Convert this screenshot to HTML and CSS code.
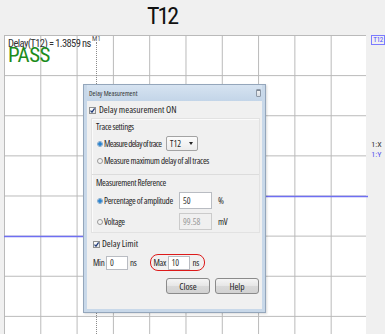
FILE: index.html
```html
<!DOCTYPE html>
<html lang="en">
<head>
  <meta charset="UTF-8">
  <title>Delay Measurement</title>
  <link rel="stylesheet" href="styles.css">
</head>
<body>

  <div class="header">T12</div>

  <div class="main">
    <div class="plot">
      <svg class="trace" width="364" height="299">
        <polyline points="0,201.5 175,201.5 175,161.5 364,161.5" />
      </svg>
      <div class="marker"></div>
      <div class="marker-label">M1</div>
      <div class="readout">Delay(T12) = 1.3859 ns</div>
      <div class="verdict">PASS</div>

      <div class="dialog">
        <div class="titlebar">
          <span class="dlg-title">Delay Measurement</span>
          <span class="grip"></span>
        </div>
        <div class="dlg-body">
          <div class="check-row top-check">
            <span class="checkbox"><svg width="5" height="5"><path d="M0.5 2.6 L2 4.2 L4.6 0.4" /></svg></span>
            Delay measurement ON
          </div>

          <div class="group">
            <div class="section">
              <div class="section-title">Trace settings</div>
              <div class="opt-row">
                <span class="radio on"></span>
                <span class="opt-label trace-label">Measure delay of trace</span>
                <span class="select">T12<span class="caret"></span></span>
              </div>
              <div class="opt-row">
                <span class="radio"></span>
                <span class="opt-label">Measure maximum delay of all traces</span>
              </div>
            </div>
            <div class="section second">
              <div class="section-title">Measurement Reference</div>
              <div class="opt-row tall">
                <span class="radio on"></span>
                <span class="opt-label ref-label">Percentage of amplitude</span>
                <span class="field wide">50</span>
                <span class="unit">%</span>
              </div>
              <div class="opt-row tall">
                <span class="radio"></span>
                <span class="opt-label ref-label">Voltage</span>
                <span class="field wide disabled">99.58</span>
                <span class="unit">mV</span>
              </div>
            </div>
          </div>

          <div class="check-row limit-check">
            <span class="checkbox"><svg width="5" height="5"><path d="M0.5 2.6 L2 4.2 L4.6 0.4" /></svg></span>
            Delay Limit
          </div>

          <div class="limit-row">
            <span class="lim-label">Min</span>
            <span class="field small">0</span>
            <span class="unit">ns</span>
            <span class="highlight">
              <span class="lim-label">Max</span>
              <span class="field small">10</span>
              <span class="unit">ns</span>
            </span>
          </div>

          <div class="buttons">
            <button class="btn">Close</button>
            <button class="btn">Help</button>
          </div>
        </div>
      </div>
    </div>

    <div class="side">
      <span class="tag">T12</span>
      <div class="axis-x">1:X</div>
      <div class="axis-y">1:Y</div>
    </div>
  </div>

</body>
</html>
```
FILE: styles.css
```css
* {
  box-sizing: border-box;
}

body {
  margin: 0;
  width: 385px;
  height: 334px;
  overflow: hidden;
  background: #f0f0f0;
  font-family: "Open Sans", sans-serif;
  font-stretch: 75%;
  color: #1e1e1e;
}

.header {
  height: 35px;
  padding: 2px 0 0 147px;
  font-family: Roboto, sans-serif;
  font-stretch: 75%;
  font-size: 24px;
  line-height: 28px;
  letter-spacing: -2px;
  color: #111;
}

.main {
  display: flex;
}

/* scope plot */
.plot {
  position: relative;
  width: 364px;
  height: 299px;
  margin-left: 4px;
  background-color: #fff;
  background-image:
    linear-gradient(to right, #b9b9b9 1px, transparent 1px),
    linear-gradient(to bottom, #b9b9b9 1px, transparent 1px);
  background-size: 36.3px 100%, 100% 40.14px;
}

.trace {
  position: absolute;
  left: 0;
  top: 0;
}

.trace polyline {
  fill: none;
  stroke: #6f6ff2;
  stroke-width: 1.4;
}

.marker {
  position: absolute;
  left: 92px;
  top: 7px;
  bottom: 0;
  border-left: 1px dotted #8a8a8a;
}

.marker-label {
  position: absolute;
  left: 88px;
  top: 0;
  font-family: Roboto, sans-serif;
  font-stretch: 75%;
  font-size: 7px;
  line-height: 8px;
  color: #555;
}

.readout {
  position: absolute;
  left: 4px;
  top: 3px;
  font-family: Roboto, sans-serif;
  font-stretch: 75%;
  font-size: 10.5px;
  line-height: 12px;
  letter-spacing: -0.6px;
  color: #333;
}

.verdict {
  position: absolute;
  left: 4px;
  top: 8px;
  font-family: Roboto, sans-serif;
  font-stretch: 75%;
  font-size: 21px;
  line-height: 24px;
  letter-spacing: -0.6px;
  color: #1c8c1c;
}

/* dialog window */
.dialog {
  position: absolute;
  left: 79px;
  top: 49px;
  width: 183px;
  height: 229px;
  border: 1px solid #94a6bb;
  background: #c8d8e9;
  padding: 0 3px 3px;
  box-shadow: 1px 1px 2px rgba(0, 0, 0, 0.15);
}

.titlebar {
  height: 16px;
  display: flex;
  align-items: center;
  justify-content: space-between;
  padding: 0 1px 0 2px;
  background: linear-gradient(#d6e3f1, #c3d5e8);
}

.dlg-title {
  font-size: 7px;
  color: #333;
}

.grip {
  width: 5px;
  height: 8px;
  border: 1px solid #8d98a6;
  border-radius: 1px;
  background: linear-gradient(#f4f4f4, #d8dde3);
  box-shadow: inset 0 3px 0 -2px #7d8794;
}

.dlg-body {
  height: 208px;
  background: #f0f0f0;
  font-size: 9px;
  letter-spacing: -0.3px;
  padding-top: 2px;
}

.check-row {
  display: flex;
  align-items: center;
  height: 14px;
  line-height: 14px;
}

.top-check {
  padding-left: 2px;
  font-size: 9.5px;
  letter-spacing: 0;
}

.limit-check {
  height: 20px;
  padding-left: 6px;
  margin-top: 1px;
  font-size: 9.5px;
  letter-spacing: 0;
}

.checkbox {
  width: 7px;
  height: 7px;
  margin-right: 3px;
  border: 1px solid #8e8f8f;
  background: linear-gradient(#fdfdfd, #e6e6e6);
  display: flex;
  align-items: center;
  justify-content: center;
}

.limit-check .checkbox {
  margin-right: 2px;
}

.checkbox svg {
  display: block;
}

.checkbox path {
  fill: none;
  stroke: #1f3a78;
  stroke-width: 1.2;
}

.group {
  margin: 1px 2px 0 4px;
  border: 1px solid #e2e2e2;
  box-shadow: inset 1px 1px 0 #fbfbfb;
}

.section {
  padding: 0 0 5px 4px;
}

.section.second {
  border-top: 1px solid #dcdcdc;
  padding-bottom: 0;
}

.section-title {
  height: 16px;
  line-height: 16px;
}

.section.second .section-title {
  height: 15px;
  line-height: 15px;
}

.opt-row {
  display: flex;
  align-items: center;
  height: 17px;
}

.opt-row.tall {
  height: 21px;
}

.radio {
  width: 6px;
  height: 6px;
  margin: 0 1px 0 1px;
  border-radius: 50%;
  border: 1px solid #9a9a9a;
  background: #f3f3f3;
  flex-shrink: 0;
}

.radio.on {
  border-color: #7fa6c9;
  background: radial-gradient(circle, #1d79c9 0, #3a8fd6 1.6px, #cfe2f2 2.2px);
}

.opt-label {
  white-space: nowrap;
}

.trace-label {
  width: 62px;
  letter-spacing: -0.6px;
}

.ref-label {
  width: 75px;
}

.select {
  position: relative;
  width: 32px;
  height: 15px;
  line-height: 13px;
  padding-left: 3px;
  border: 1px solid #a3a3a3;
  border-radius: 2px;
  background: linear-gradient(#fbfbfb, #ececec);
  letter-spacing: 0;
}

.caret {
  position: absolute;
  right: 4px;
  top: 5px;
  border-left: 2px solid transparent;
  border-right: 2px solid transparent;
  border-top: 3px solid #222;
}

.field {
  height: 17px;
  line-height: 15px;
  padding-left: 3px;
  border: 1px solid #b9bcc2;
  background: #fff;
  color: #333;
  letter-spacing: 0;
}

.field.wide {
  width: 33px;
}

.field.disabled {
  background: #f0f0f0;
  border-color: #cbcbcb;
  color: #9a9a9a;
}

.field.small {
  width: 22px;
  height: 14px;
  line-height: 12px;
}

.unit {
  margin-left: 6px;
}

.limit-row {
  display: flex;
  align-items: center;
  height: 17px;
  padding-left: 6px;
}

.lim-label {
  margin-right: 1px;
  width: 12px;
}

.limit-row .unit {
  margin-left: 2px;
  width: 20px;
}

.highlight {
  display: flex;
  align-items: center;
  width: 55px;
  height: 17px;
  padding-left: 2.5px;
  border: 1.5px solid #dd1a1a;
  border-radius: 8px;
}

.highlight .lim-label {
  width: 13px;
}

.highlight .unit {
  margin-left: 3px;
  width: auto;
}

.buttons {
  display: flex;
  justify-content: flex-end;
  gap: 5px;
  margin-top: 7px;
  padding-right: 3px;
}

.btn {
  width: 44px;
  height: 16px;
  padding: 0;
  border: 1px solid #8b8b8b;
  border-radius: 3px;
  background: linear-gradient(#f5f5f5, #e6e6e6 50%, #d9d9d9 51%, #d2d2d2);
  font-family: "Open Sans", sans-serif;
  font-stretch: 75%;
  font-size: 9.5px;
  color: #1e1e1e;
}

/* right axis labels */
.side {
  flex: 1;
  padding-left: 5px;
  font-family: Roboto, sans-serif;
  font-stretch: 75%;
  font-size: 8px;
  line-height: 10px;
}

.tag {
  display: inline-block;
  border: 1px solid #7b7bff;
  color: #4a4aff;
  font-size: 7px;
  line-height: 8px;
  letter-spacing: -0.3px;
  padding: 0 1px;
}

.axis-x {
  margin-top: 95px;
  color: #333;
}

.axis-y {
  color: #5555ee;
}
```
